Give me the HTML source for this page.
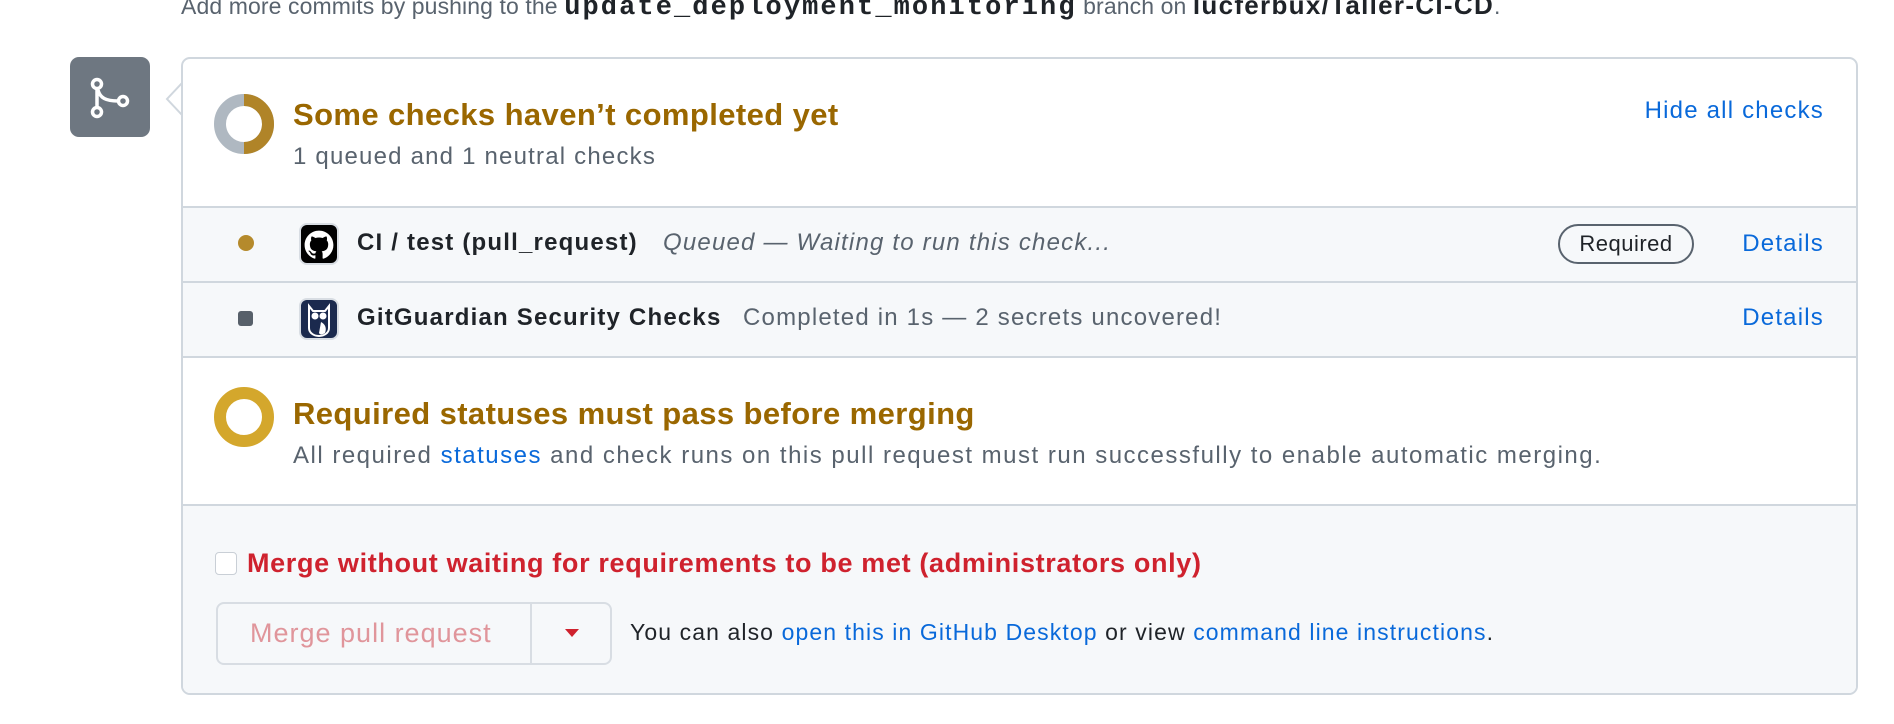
<!DOCTYPE html>
<html><head><meta charset="utf-8"><style>
*{box-sizing:border-box;margin:0;padding:0}
body{width:1894px;height:724px;background:#fff;font-family:"Liberation Sans",sans-serif;position:relative;overflow:hidden;color:#1f2328}
.a{position:absolute;white-space:nowrap}
.blue{color:#0969da}
.t{font-size:24px;letter-spacing:1.2px}
.card{position:absolute;left:181px;top:57px;width:1677px;height:638px;border:2px solid #d0d7de;border-radius:9px;overflow:hidden;background:#fff}
.sec{position:absolute;left:0;right:0;border-top:2px solid #d0d7de}
</style></head><body>
<div class="a" style="left:181px;top:-10px;font-size:23px;letter-spacing:0.1px;color:#59636e">Add more commits by pushing to the <b style="font-family:'Liberation Mono',monospace;color:#1f2328;font-size:27px;letter-spacing:2.1px">update_deployment_monitoring</b> branch on <b style="color:#1f2328;font-size:26px;letter-spacing:1.3px">lucferbux/Taller-CI-CD</b>.</div>

<div class="a" style="left:70px;top:57px;width:80px;height:80px;background:#6e7781;border-radius:9px">
<svg width="80" height="80" viewBox="0 0 80 80"><g fill="none" stroke="#fff" stroke-width="3.5"><circle cx="27" cy="27" r="4.5"/><circle cx="27" cy="55" r="4.5"/><circle cx="53" cy="44" r="4.5"/><path d="M27 31.5v19M28 33c2 8 8 11 20 11"/></g></svg></div>
<svg class="a" style="left:165px;top:82px" width="20" height="34"><path d="M18 0L2 17L18 34" fill="#fff" stroke="#d0d7de" stroke-width="2"/></svg>

<div class="card">
 <svg class="a" style="left:30px;top:34px" width="62" height="62"><circle cx="31" cy="31" r="24" fill="none" stroke="#afb8c1" stroke-width="12"/><path d="M31 7a24 24 0 0 1 0 48" fill="none" stroke="#b08428" stroke-width="12"/></svg>
 <div class="a" style="left:110px;top:38px;font-size:31px;letter-spacing:0.4px;font-weight:bold;color:#9a6700">Some checks haven’t completed yet</div>
 <div class="a t" style="left:110px;top:84px;color:#59636e">1 queued and 1 neutral checks</div>
 <div class="a blue t" style="right:32px;top:38px">Hide all checks</div>

 <div class="sec" style="top:147px;height:76px;background:#f6f8fa">
  <div class="a" style="left:55px;top:27px;width:16px;height:16px;border-radius:50%;background:#b58a2c"></div>
  <div class="a" style="left:116px;top:15px;width:40px;height:42px;background:#000;border-radius:8px;border:2px solid #d8dde3">
   <svg width="36" height="38" viewBox="0 0 16 16" style="display:block;margin:1px 0 0 0"><path fill="#fff" d="M8 0C3.58 0 0 3.58 0 8c0 3.540 2.29 6.53 5.47 7.59.4.07.55-.17.55-.38 0-.19-.01-.82-.01-1.49-2.010.37-2.53-.49-2.690-.94-.09-.23-.48-.94-.82-1.13-.28-.15-.68-.52-.01-.53.63-.01 1.08.58 1.23.82.72 1.21 1.870.87 2.330.66.07-.52.28-.87.51-1.070-1.78-.2-3.64-.89-3.64-3.950 0-.87.31-1.590.82-2.150-.08-.2-.36-1.020.08-2.120 0 0 .67-.21 2.2.82.64-.18 1.32-.27 2-.27.68 0 1.360.09 2 .27 1.53-1.040 2.2-.82 2.2-.82.44 1.1.16 1.920.08 2.120.51.56.82 1.270.82 2.150 0 3.070-1.870 3.750-3.650 3.950.29.25.54.73.54 1.480 0 1.070-.01 1.930-.01 2.2 0 .21.15.46.55.38A8.013 8.013 0 0016 8c0-4.42-3.58-8-8-8z" transform="scale(.8) translate(2 2)"/></svg></div>
  <div class="a t" style="left:174px;top:21px;font-weight:bold">CI / test (pull_request)</div>
  <div class="a t" style="left:480px;top:21px;font-style:italic;color:#59636e">Queued — Waiting to run this check...</div>
  <div class="a" style="left:1375px;top:16px;width:136px;height:40px;border:2px solid #59636e;border-radius:20px;font-size:22px;letter-spacing:0.5px;text-align:center;line-height:36px">Required</div>
  <div class="a blue t" style="right:32px;top:22px">Details</div>
 </div>
 <div class="sec" style="top:222px;height:76px;background:#f6f8fa">
  <div class="a" style="left:55px;top:28px;width:15px;height:15px;border-radius:3px;background:#57606a"></div>
  <div class="a" style="left:116px;top:15px;width:40px;height:42px;background:#1b2a4e;border-radius:8px;border:2px solid #d8dde3">
   <svg width="36" height="38" viewBox="0 0 36 38"><path d="M8 6l4 5h12l4-5v22c0 5-5 8-10 8s-10-3-10-8z" fill="none" stroke="#fff" stroke-width="2"/><circle cx="14" cy="16" r="3.5" fill="#fff"/><circle cx="22" cy="16" r="3.5" fill="#fff"/><path d="M20 22c4 2 6 6 4 11-3 2-5 2-6 0z" fill="#fff"/></svg></div>
  <div class="a t" style="left:174px;top:21px;font-weight:bold">GitGuardian Security Checks</div>
  <div class="a t" style="left:560px;top:21px;color:#59636e">Completed in 1s — 2 secrets uncovered!</div>
  <div class="a blue t" style="right:32px;top:21px">Details</div>
 </div>

 <div class="sec" style="top:297px;height:150px;background:#fff">
  <svg class="a" style="left:30px;top:28px" width="62" height="62"><circle cx="31" cy="31" r="24" fill="none" stroke="#d4a72c" stroke-width="12"/></svg>
  <div class="a" style="left:110px;top:38px;font-size:31px;letter-spacing:0.4px;font-weight:bold;color:#9a6700">Required statuses must pass before merging</div>
  <div class="a t" style="left:110px;top:84px;color:#59636e;letter-spacing:1.5px">All required <span class="blue">statuses</span> and check runs on this pull request must run successfully to enable automatic merging.</div>
 </div>

 <div class="sec" style="top:445px;height:200px;background:#f6f8fa">
  <div class="a" style="left:32px;top:46px;width:22px;height:23px;border:1.5px solid #c9cfd6;border-radius:4px;background:#fff"></div>
  <div class="a" style="left:64px;top:42px;font-size:27px;letter-spacing:0.65px;font-weight:bold;color:#cf222e">Merge without waiting for requirements to be met (administrators only)</div>
  <div class="a" style="left:33px;top:96px;width:396px;height:63px;border:2px solid #d8dde3;border-radius:8px;background:#f6f8fa">
   <div class="a" style="left:32px;top:14px;font-size:27px;letter-spacing:1px;color:#e0959b">Merge pull request</div>
   <div class="a" style="left:312px;top:0;width:2px;height:59px;background:#d8dde3"></div>
   <div class="a" style="left:347px;top:25px;width:0;height:0;border-left:7px solid transparent;border-right:7px solid transparent;border-top:8px solid #cf222e"></div>
  </div>
  <div class="a" style="left:447px;top:113px;font-size:23px;letter-spacing:1.1px">You can also <span class="blue">open this in GitHub Desktop</span> or view <span class="blue">command line instructions</span>.</div>
 </div>
</div>
</body></html>
